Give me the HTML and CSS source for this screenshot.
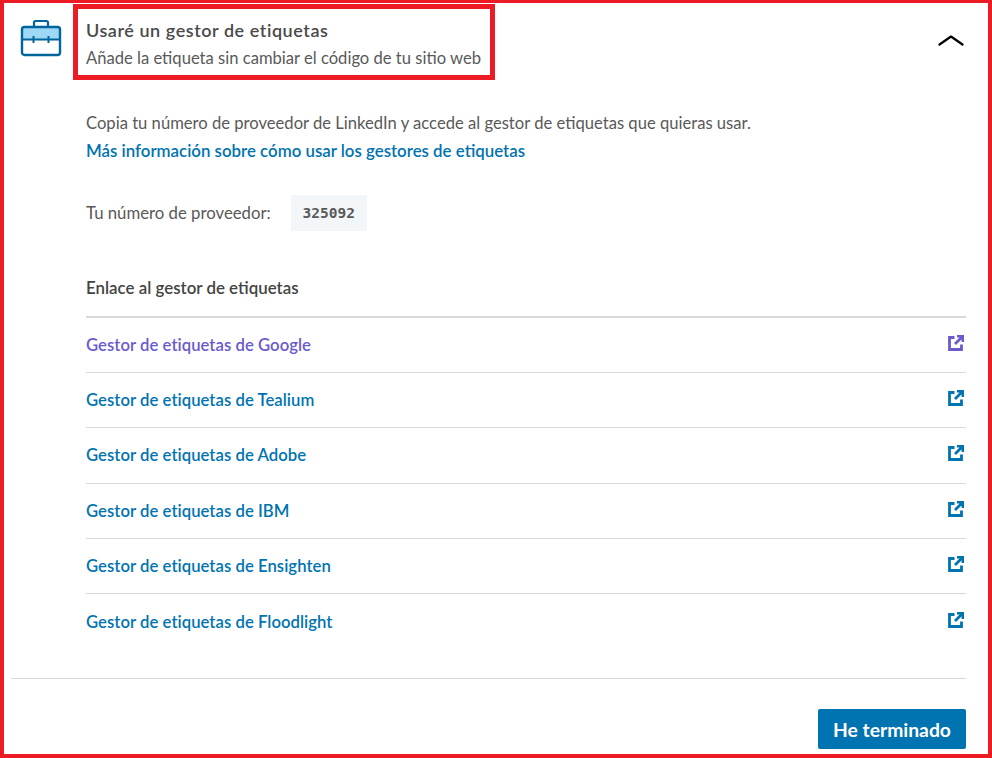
FILE: index.html
```html
<!DOCTYPE html>
<html lang="es">
<head>
<meta charset="utf-8">
<title>Gestor de etiquetas</title>
<link rel="stylesheet" href="styles.css">
</head>
<body>
<main class="frame">
  <header class="head">
    <svg class="case" width="42" height="38" viewBox="0 0 42 38">
      <path d="M2 9h38v9a3 3 0 0 1-3 3H5a3 3 0 0 1-3-3z" fill="#9fd8f5"/>
      <path d="M14 8V3.500A1.500 1.500 0 0 1 15.500 2h11A1.500 1.500 0 0 1 28 3.500V8" fill="none" stroke="#00659c" stroke-width="2.200"/>
      <rect x="2" y="8" width="38" height="28" rx="2.500" fill="none" stroke="#00659c" stroke-width="2.400"/>
      <path d="M3 20.500h36M13.500 17v7M28.500 17v7" fill="none" stroke="#00659c" stroke-width="2"/>
    </svg>
    <div class="mark">
      <h1 class="title">Usaré un gestor de etiquetas</h1>
      <p class="sub">Añade la etiqueta sin cambiar el código de tu sitio web</p>
    </div>
    <svg class="chev" width="26" height="12" viewBox="0 0 26 12"><path d="M1.500 10.500 13 2.500l11.500 8" fill="none" stroke="#000" stroke-width="2.200" stroke-linecap="round" stroke-linejoin="round"/></svg>
  </header>

  <section class="body">
    <p class="copy">Copia tu número de proveedor de LinkedIn y accede al gestor de etiquetas que quieras usar.</p>
    <a class="more" href="#">Más información sobre cómo usar los gestores de etiquetas</a>
    <div class="provider">
      <span class="plabel">Tu número de proveedor:</span>
      <code class="pid">325092</code>
    </div>
    <h2 class="lhead">Enlace al gestor de etiquetas</h2>
    <ul class="list">
      <li class="row visited"><a href="#">Gestor de etiquetas de Google</a><svg class="ext" width="16" height="16" viewBox="0 0 16 16"><path d="M6.500 2.500H1.500v12h12v-5M9 1h6v6M14.500 1.500 7 9" fill="none" stroke="currentColor" stroke-width="2.800"/></svg></li>
      <li class="row"><a href="#">Gestor de etiquetas de Tealium</a><svg class="ext" width="16" height="16" viewBox="0 0 16 16"><path d="M6.500 2.500H1.500v12h12v-5M9 1h6v6M14.500 1.500 7 9" fill="none" stroke="currentColor" stroke-width="2.800"/></svg></li>
      <li class="row"><a href="#">Gestor de etiquetas de Adobe</a><svg class="ext" width="16" height="16" viewBox="0 0 16 16"><path d="M6.500 2.500H1.500v12h12v-5M9 1h6v6M14.500 1.500 7 9" fill="none" stroke="currentColor" stroke-width="2.800"/></svg></li>
      <li class="row"><a href="#">Gestor de etiquetas de IBM</a><svg class="ext" width="16" height="16" viewBox="0 0 16 16"><path d="M6.500 2.500H1.500v12h12v-5M9 1h6v6M14.500 1.500 7 9" fill="none" stroke="currentColor" stroke-width="2.800"/></svg></li>
      <li class="row"><a href="#">Gestor de etiquetas de Ensighten</a><svg class="ext" width="16" height="16" viewBox="0 0 16 16"><path d="M6.500 2.500H1.500v12h12v-5M9 1h6v6M14.500 1.500 7 9" fill="none" stroke="currentColor" stroke-width="2.800"/></svg></li>
      <li class="row"><a href="#">Gestor de etiquetas de Floodlight</a><svg class="ext" width="16" height="16" viewBox="0 0 16 16"><path d="M6.500 2.500H1.500v12h12v-5M9 1h6v6M14.500 1.500 7 9" fill="none" stroke="currentColor" stroke-width="2.800"/></svg></li>
    </ul>
  </section>

  <footer class="foot">
    <button class="done" type="button">He terminado</button>
  </footer>
</main>
</body>
</html>
```
FILE: styles.css
```css
* { box-sizing: border-box; }
html, body { margin: 0; padding: 0; background: #fff; }
body { font-family: Lato, "Noto Sans", sans-serif; color: #595959; }
.frame {
  width: 992px;
  height: 758px;
  border: solid #ed1c24;
  border-width: 3px 4px 4px 4px;
  background: #fff;
  overflow: hidden;
}
.head {
  display: flex;
  align-items: flex-start;
  padding: 1px 24px 0 16px;
}
.case { margin-top: 15px; margin-right: 11px; flex: none; }
.mark {
  border: 5px solid #ed1c24;
  width: 422px;
  height: 76px;
  padding: 8px 0 0 8px;
}
.title { margin: 0; font-size: 18px; line-height: 26px; font-weight: 600; letter-spacing: 0.550px; color: #4a4a4a; }
.sub { margin: 2px 0 0; font-size: 16.600px; line-height: 26px; color: #595959; white-space: nowrap; }
.chev { margin: 30px 0 0 auto; flex: none; }
.body { padding: 29px 22px 0 82px; }
.copy { margin: 0; font-size: 16.620px; line-height: 28px; }
.more { display: block; font-size: 16.850px; line-height: 28px; font-weight: 600; color: #0073b1; text-decoration: none; }
.provider { display: flex; align-items: center; margin-top: 30px; height: 36px; }
.plabel { font-size: 16.750px; line-height: 36px; height: 36px; margin-top: -1px; }
.pid {
  margin-left: 20px;
  width: 76px;
  height: 36px;
  display: flex;
  align-items: center;
  justify-content: center;
  background: #f3f6f8;
  border-radius: 2px;
  font-family: "DejaVu Sans Mono", monospace;
  font-size: 14.500px;
  font-weight: 700;
  color: #595959;
}
.lhead { margin: 44px 0 0; height: 43px; font-size: 16.900px; line-height: 26px; font-weight: 600; color: #444; border-bottom: 2px solid #d9d9d9; }
.list { margin: 0; padding: 0; list-style: none; }
.row {
  display: flex;
  justify-content: space-between;
  align-items: center;
  height: 55.200px;
  border-bottom: 1px solid #d9d9d9;
  color: #0073b1;
}
.row:last-child { border-bottom: 0; }
.row a { color: inherit; text-decoration: none; font-size: 16.700px; letter-spacing: 0.040px; font-weight: 600; }
.row.visited { color: #6a5acd; }
.ext { margin: -4px 2px 0 0; }
.foot {
  margin: 29px 22px 0 7px;
  border-top: 1px solid #d9d9d9;
  padding-top: 30px;
  display: flex;
  justify-content: flex-end;
}
.done {
  width: 148px;
  height: 40px;
  border: 0;
  border-radius: 2px;
  background: #0073b1;
  color: #fff;
  font-family: inherit;
  font-size: 19.300px;
  font-weight: 700;
}
```
